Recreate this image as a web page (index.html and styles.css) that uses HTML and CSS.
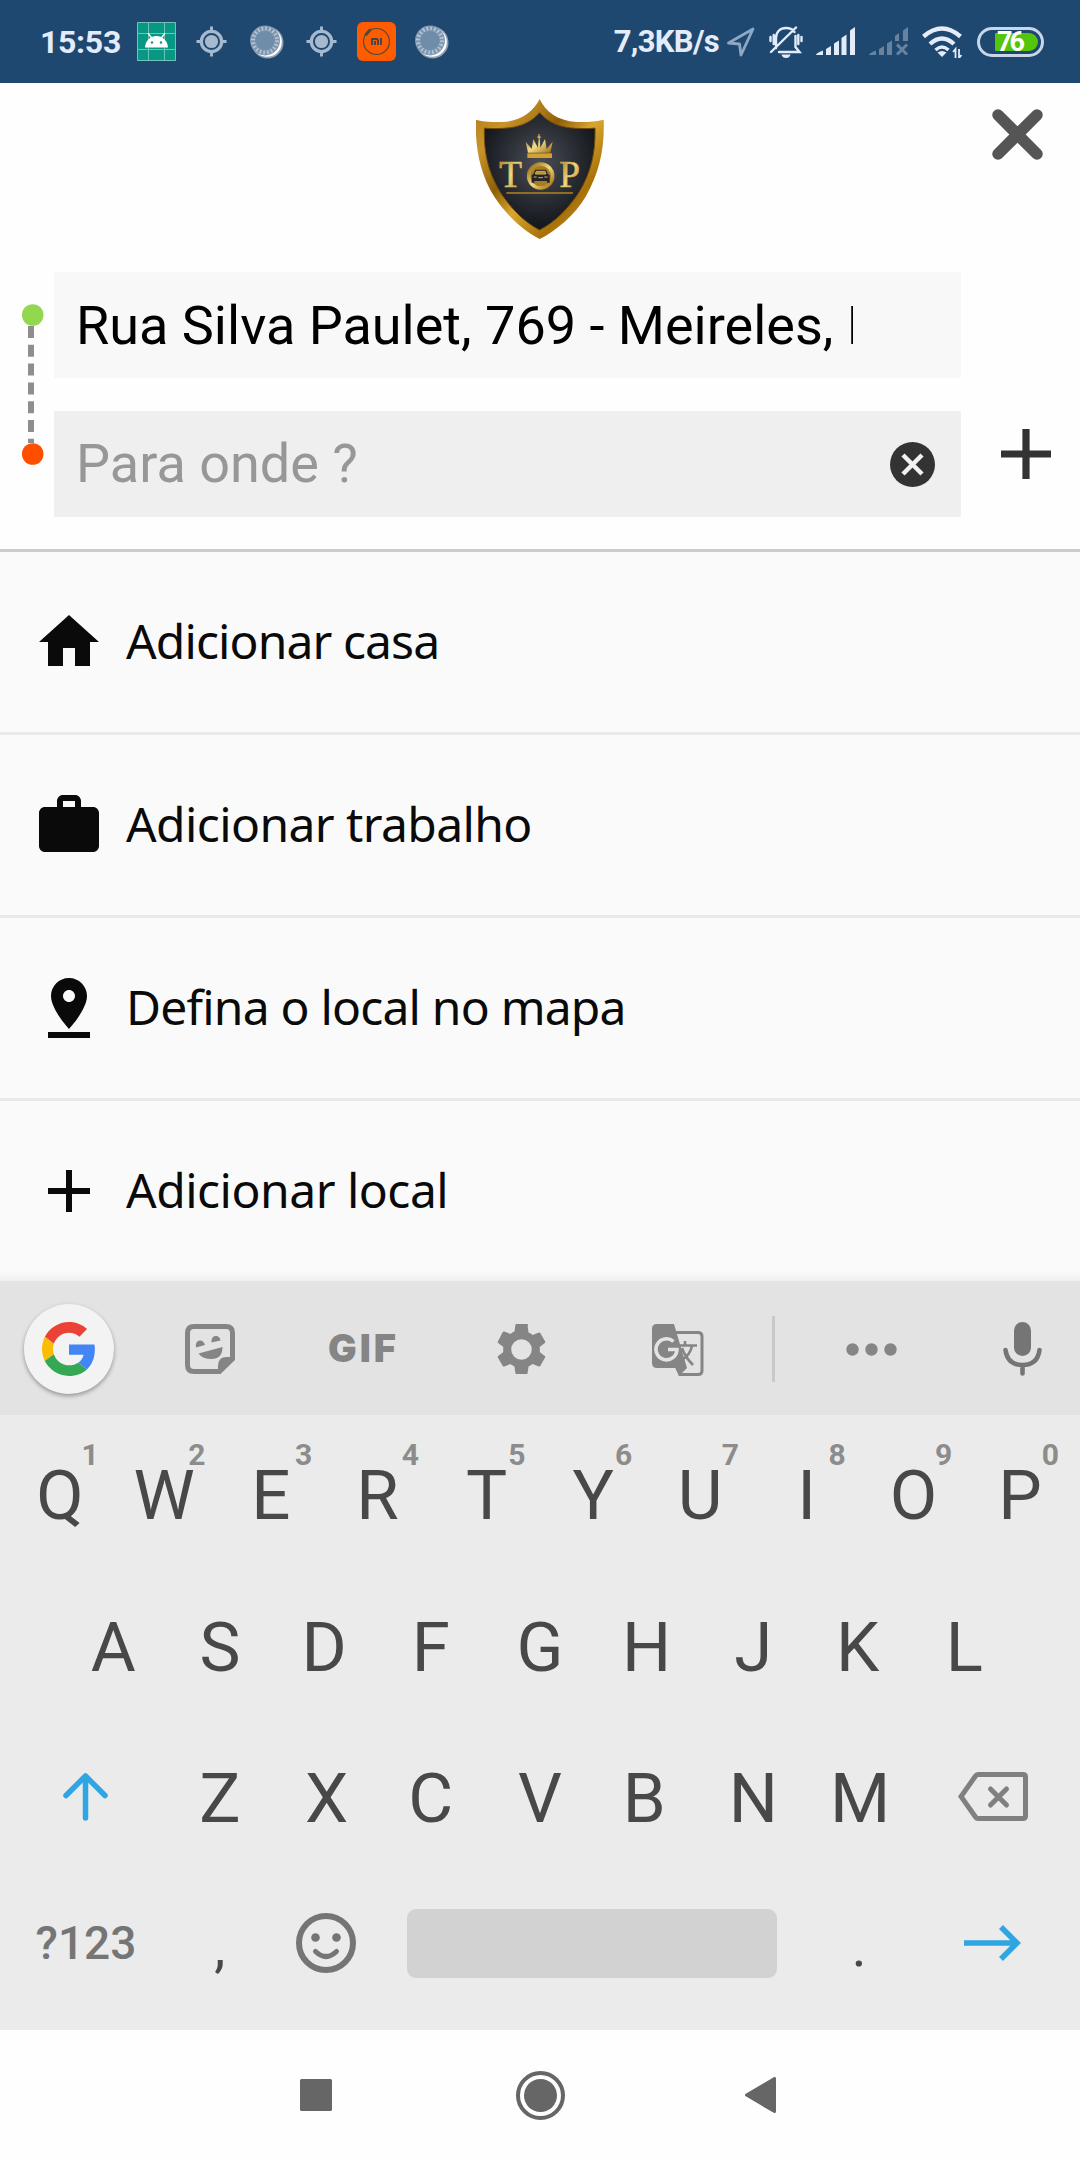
FILE: index.html
```
<!DOCTYPE html>
<html lang="pt-BR">
<head>
<meta charset="utf-8">
<title>Para onde?</title>
<link rel="stylesheet" href="styles.css">
</head>
<body>
<svg class="defs" width="0" height="0" aria-hidden="true">
  <defs>
    <linearGradient id="gold" x1="0" y1="0" x2="1" y2="1">
      <stop offset="0" stop-color="#b07a12"/><stop offset=".2" stop-color="#c8942a"/><stop offset=".4" stop-color="#8f5f08"/>
      <stop offset=".55" stop-color="#d8a62e"/><stop offset=".75" stop-color="#a87008"/><stop offset="1" stop-color="#e0b03a"/>
    </linearGradient>
    <linearGradient id="goldText" x1="0" y1="0" x2="1" y2="1">
      <stop offset="0" stop-color="#8f650e"/><stop offset=".5" stop-color="#f3da84"/><stop offset="1" stop-color="#9a6a0c"/>
    </linearGradient>
    <radialGradient id="night" cx=".5" cy=".42" r=".55">
      <stop offset="0" stop-color="#4a4d55"/><stop offset="1" stop-color="#14181d"/>
    </radialGradient>
    <symbol id="target" viewBox="0 0 32 32">
      <g fill="none" stroke="#a5b9cf"><circle cx="16" cy="16" r="10.5" stroke-width="3.4"/><path d="M16 .5v5M16 26.500v5M.5 16h5M26.500 16h5" stroke-width="3"/></g>
      <circle cx="16" cy="16" r="6.800" fill="#a5b9cf"/>
    </symbol>
    <symbol id="disc" viewBox="0 0 34 34">
      <circle cx="17.500" cy="17.500" r="16" fill="#8fa0b2"/>
      <circle cx="17" cy="17" r="14.800" fill="#fff"/>
      <circle cx="15" cy="15.500" r="15" fill="#7f97b0"/>
      <circle cx="15" cy="15.500" r="12" fill="none" stroke="#b9c7d6" stroke-width="4" stroke-dasharray="1.500 2.270"/>
      <circle cx="15" cy="15.500" r="9.500" fill="#6f8ca9"/>
    </symbol>
  </defs>
</svg>

<div class="screen">
  <div class="status">
    <div class="status-left">
      <span class="clock">15:53</span>
      <svg class="app" viewBox="0 0 39 39"><path fill="#089783" d="M0 0h39v39H0z"/><path stroke="#6cc5b8" fill="none" d="M.5.5h38v38H.5zM11.500 0v39M27.500 0v39M0 11.500h39M0 27.500h39"/><path fill="#fff" d="M8 25.500c.3-4.500 2.200-8 5.500-9.800L10.500 11.500l1-.8 3.300 4.300a13 13 0 0 1 9.400 0l3.300-4.300 1 .8-3 4.200c3.300 1.800 5.200 5.300 5.500 9.800z"/><circle cx="15" cy="20.500" r="1.200" fill="#089783"/><circle cx="24" cy="20.500" r="1.200" fill="#089783"/></svg>
      <svg class="target"><use href="#target"/></svg>
      <svg class="disc"><use href="#disc"/></svg>
      <svg class="target"><use href="#target"/></svg>
      <svg class="app" viewBox="0 0 39 39"><rect width="39" height="39" rx="6" fill="#ff5c00"/><circle cx="19.500" cy="19.500" r="13" fill="none" stroke="#4c4c40" stroke-width="1.200"/><path d="M8 13.500l6-6" stroke="#ff5c00" stroke-width="7"/><path d="M9 12.500l4-4.500" stroke="#4c4c40" stroke-width="3" stroke-linecap="round"/><path d="M15 23v-6h4.500q1.500 0 1.500 1.500V23M18 19v4M24 16v7" fill="none" stroke="#40464a" stroke-width="1.900"/></svg>
      <svg class="disc"><use href="#disc"/></svg>
    </div>
    <div class="status-right">
      <span class="speed">7,3KB/s</span>
      <svg class="nav-arrow" viewBox="0 0 30 30"><path d="M27 2 2.500 16l11 1L15 28z" fill="none" stroke="#8fa7c2" stroke-width="2.800" stroke-linejoin="round"/></svg>
      <svg class="bell" viewBox="0 0 34 32"><g fill="none" stroke="#e4ecfa" stroke-width="2.400"><path d="M7 22V12c0-6 4-10 10-10 4 0 7 1.500 8.500 4M26.500 10v11l4 5H10M2 26 27 1.500M1.500 11v4M4.700 9v9M29.300 9v9M32.500 11v4" stroke-linecap="round"/></g><path d="M12.500 28.500h9q-1 3.500-4.500 3.500t-4.500-3.500z" fill="#e4ecfa"/></svg>
      <svg class="signal" viewBox="0 0 40 28"><path fill="#e4ecfa" d="M0 28q0-2 7-4.500V28zM10 22l5-3v9h-5zM18 16.500l5-3V28h-5zM25.500 11l5-3.500V28h-5zM34 3.500 39 0v28h-5z"/></svg>
      <svg class="signal sim2" viewBox="0 0 40 28"><path fill="#69839f" d="M0 28q0-2 7-4.500V28zM10 22l5-3v9h-5zM18 16.500l5-3V28h-5zM26 9l4-3v8h-4zM34 3.500 39 0v14h-5z"/><path d="m28 17.500 10 10m0-10-10 10" stroke="#69839f" stroke-width="3"/></svg>
      <svg class="wifi" viewBox="0 0 40 32"><g fill="none" stroke="#e4ecfa" stroke-width="4.400"><path d="M1.500 10.500q18.500-16 37 0M8 18q12-11 24 0"/><path d="M13.500 24q6.500-6 13 0" stroke-width="3.500"/></g><path d="m15.500 26.500 4.500 4.500 4.500-4.500q-4.500-3-9 0z" fill="#e4ecfa"/><path d="M33.500 32v-9l-2.500 3M37 23v9l2.500-3" fill="none" stroke="#e4ecfa" stroke-width="1.800"/></svg>
      <div class="battery"><span class="battery-level">76</span></div>
    </div>
  </div>

  <header class="header">
    <div class="brand-row">
      <svg class="logo" viewBox="49 42 384 420">
        <path fill="url(#gold)" d="M240 42C222 78 185 108 130 111 95 112 65 109 49 104 46 180 58 262 105 337 140 390 190 437 240 462 290 437 345 390 378 335 420 262 435 190 432 104 410 109 385 112 350 111 292 107 258 80 240 42z"/>
        <path fill="url(#night)" stroke="#6d4a08" stroke-width="3" d="M240 83C215 112 180 128 130 130 105 131 85 131 74 129 72 200 84 260 122 322 155 372 195 412 240 435 285 412 325 372 358 322 395 262 408 200 406 129 390 131 375 131 350 130 300 128 265 112 240 83z"/>
        <path fill="url(#goldText)" d="M205 203 198 170l18 22 5-30 14 26 2-28-6-4 5-2v-7h4v7l5 2-5 4 2 28 14-26 5 30 18-22-7 33z"/>
        <path fill="#d3a12d" d="M203 205h74v14h-74z"/>
        <circle cx="243" cy="273" r="35" fill="#171a1f" stroke="url(#goldText)" stroke-width="13"/>
        <circle cx="243" cy="273" r="31" fill="#a97c20"/>
        <path fill="#22252a" d="M227 254h32l6 13 5 4v22h-8v-5h-38v5h-8v-22l5-4z"/><path d="M230 259h26l3 8h-32zM222 276h9M254 276h10M236 278h14" fill="#b98c2a" stroke="#d8b14a" stroke-width="3"/>
        <text class="logo-text" x="119" y="307">T</text><text class="logo-text" x="299" y="307">P</text>
        <path d="M140 324h200" stroke="#b5831d" stroke-width="5"/>
      </svg>
      <svg class="close" viewBox="0 0 51 51"><path d="m6 6 39 39m0-39L6 45" stroke="#555" stroke-width="11.500" stroke-linecap="round"/></svg>
    </div>
    <div class="route">
      <svg class="route-line" viewBox="0 0 22 162"><path d="M9 22v117" stroke="#8e8e8e" stroke-width="6" stroke-dasharray="12 6.800"/><circle cx="10.700" cy="11" r="10.800" fill="#92d84e"/><circle cx="10.700" cy="150" r="10.800" fill="#ff4e00"/></svg>
      <div class="fields">
        <div class="field from"><span class="value">Rua Silva Paulet, 769 - Meireles, Fortaleza</span></div>
        <div class="field to"><span class="placeholder">Para onde ?</span>
          <svg class="clear" viewBox="0 0 45 45"><circle cx="22.500" cy="22.500" r="22.500" fill="#333"/><path d="m13 13 19 19m0-19L13 32" stroke="#f2f2f2" stroke-width="4.500"/></svg>
        </div>
      </div>
      <svg class="add-stop" viewBox="0 0 50 50"><path d="M25 0v50M0 25h50" stroke="#333" stroke-width="7.200"/></svg>
    </div>
  </header>

  <main class="list">
    <div class="row"><svg class="row-icon" viewBox="0 0 24 24"><path d="M10 20v-6h4v6h5v-8h3L12 3 2 12h3v8z"/></svg><span class="label home-label">Adicionar casa</span></div>
    <div class="row"><svg class="row-icon" viewBox="0 0 24 24"><path d="M20 6h-4V4c0-1.110-.89-2-2-2h-4c-1.110 0-2 .89-2 2v2H4c-1.110 0-2 .89-2 2v11c0 1.110.89 2 2 2h16c1.110 0 2-.89 2-2V8c0-1.110-.89-2-2-2zm-6 0h-4V4h4v2z"/></svg><span class="label work-label">Adicionar trabalho</span></div>
    <div class="row"><svg class="row-icon" viewBox="0 0 24 24"><path d="M18 8c0-3.310-2.690-6-6-6S6 4.690 6 8c0 4.500 6 11 6 11s6-6.500 6-11zm-8 0c0-1.100.9-2 2-2s2 .9 2 2-.89 2-2 2c-1.100 0-2-.9-2-2zM5 20v2h14v-2H5z"/></svg><span class="label map-label">Defina o local no mapa</span></div>
    <div class="row"><svg class="row-icon" viewBox="0 0 24 24"><path d="M19 13h-6v6h-2v-6H5v-2h6V5h2v6h6v2z"/></svg><span class="label place-label">Adicionar local</span></div>
  </main>

  <section class="keyboard">
    <div class="tools">
      <div class="g-button"><svg viewBox="0 0 48 48"><path fill="#EA4335" d="M24 9.500c3.540 0 6.710 1.220 9.210 3.600l6.850-6.850C35.900 2.380 30.470 0 24 0 14.620 0 6.510 5.380 2.560 13.220l7.980 6.190C12.430 13.720 17.740 9.500 24 9.500z"/><path fill="#4285F4" d="M46.980 24.550c0-1.570-.15-3.090-.38-4.550H24v9.020h12.940c-.58 2.960-2.260 5.480-4.780 7.180l7.730 6c4.510-4.180 7.090-10.360 7.090-17.650z"/><path fill="#FBBC05" d="M10.530 28.590c-.48-1.450-.76-2.990-.76-4.590s.27-3.140.76-4.590l-7.980-6.190C.92 16.460 0 20.120 0 24c0 3.880.92 7.540 2.560 10.780l7.970-6.190z"/><path fill="#34A853" d="M24 48c6.480 0 11.930-2.130 15.890-5.810l-7.730-6c-2.150 1.450-4.920 2.300-8.160 2.300-6.260 0-11.570-4.220-13.470-9.910l-7.980 6.190C6.510 42.620 14.620 48 24 48z"/></svg></div>
      <svg class="sticker" viewBox="0 0 50 50"><path d="M9 2.500h32q6.500 0 6.500 6.500v26L34.500 47.500H9q-6.500 0-6.500-6.500V9q0-6.500 6.500-6.500z" fill="none" stroke="#858585" stroke-width="5"/><path fill="#858585" d="M33 49V42q0-9 8.500-9H49v2L35 49zM13.500 29.500 37.500 23q0 12-11 12-9 0-13-5.500zM11 23.500q-1-6 3.500-7 4-.5 5.500 4.500zM26.500 18.500q-.5-6 4-6.500 4-.5 5 4.500z"/></svg>
      <span class="gif">GIF</span>
      <svg class="gear" viewBox="2 2 20 20"><path fill="#858585" d="M19.140 12.940c.04-.3.060-.61.060-.94 0-.32-.02-.64-.07-.94l2.030-1.580c.18-.14.23-.41.120-.61l-1.920-3.320c-.12-.22-.37-.29-.59-.22l-2.390.96c-.5-.38-1.030-.7-1.620-.94l-.36-2.540A.48.48 0 0 0 13.920 2h-3.840c-.24 0-.43.170-.47.410l-.36 2.540c-.59.240-1.130.570-1.620.940l-2.390-.96c-.22-.08-.47 0-.59.220L2.740 8.870c-.12.210-.08.470.12.610l2.030 1.580c-.05.300-.09.630-.09.940s.02.640.07.940l-2.030 1.580c-.18.140-.23.410-.12.610l1.920 3.320c.12.220.37.290.59.220l2.390-.96c.5.380 1.030.7 1.620.940l.36 2.540c.05.240.24.410.48.410h3.840c.24 0 .44-.17.470-.41l.36-2.540c.59-.24 1.130-.56 1.620-.94l2.390.96c.22.080.47 0 .59-.22l1.920-3.320c.12-.22.070-.47-.12-.61l-2.010-1.580zM12 16.050A4.050 4.050 0 1 1 12 7.950a4.050 4.050 0 0 1 0 8.100z"/></svg>
      <svg class="translate" viewBox="0 0 52 52"><path d="M22 8.500h24q4 0 4 4v34q0 4-4 4H28L24 42" fill="none" stroke="#858585" stroke-width="3"/><path fill="#858585" d="M5 0h17l13 44-8 8-3-8H5q-5 0-5-5V5q0-5 5-5z"/><path d="M21.500 17.500a10.500 10.500 0 1 0 3.500 8h-9" fill="none" stroke="#e3e3e3" stroke-width="3.600"/><path d="M27 21.500h18M33 17v4.500M40 22q-2 9-10 14M30 24q3 9 11 17" fill="none" stroke="#858585" stroke-width="2.600"/></svg>
      <div class="tool-rule"></div>
      <svg class="dots" viewBox="0 0 51 13"><g fill="#858585"><circle cx="6.500" cy="6.500" r="6.200"/><circle cx="25.500" cy="6.500" r="6.200"/><circle cx="44.500" cy="6.500" r="6.200"/></g></svg>
      <svg class="mic" viewBox="0 0 39 54"><rect x="11" width="17" height="34" rx="8.500" fill="#757575"/><path d="M2.500 28q2 15 17 15t17-15M19.500 43v8.500" fill="none" stroke="#757575" stroke-width="4.600" stroke-linecap="round"/></svg>
    </div>
    <div class="keys">
      <div class="key-row">
        <div class="key">Q<sup>1</sup></div><div class="key shifted">W<sup>2</sup></div><div class="key shifted">E<sup>3</sup></div><div class="key shifted">R<sup>4</sup></div><div class="key">T<sup>5</sup></div><div class="key">Y<sup>6</sup></div><div class="key">U<sup>7</sup></div><div class="key">I<sup>8</sup></div><div class="key">O<sup>9</sup></div><div class="key">P<sup>0</sup></div>
      </div>
      <div class="key-row">
        <div class="key">A</div><div class="key">S</div><div class="key shifted">D</div><div class="key shifted">F</div><div class="key">G</div><div class="key">H</div><div class="key">J</div><div class="key shifted">K</div><div class="key shifted">L</div>
      </div>
      <div class="key-row">
        <div class="key wide"><svg class="shift" viewBox="0 0 45 48"><path d="M22.500 45V4M3 22.500 22.500 3 42 22.500" fill="none" stroke="#2fa5e2" stroke-width="5.500" stroke-linecap="round" stroke-linejoin="round"/></svg></div>
        <div class="key">Z</div><div class="key">X</div><div class="key shifted">C</div><div class="key">V</div><div class="key shifted">B</div><div class="key">N</div><div class="key">M</div>
        <div class="key wide"><svg class="backspace" viewBox="0 0 70 49"><g fill="none" stroke="#808080" stroke-width="5"><path d="M20 2.500h45q2.500 0 2.500 2.500v39q0 2.500-2.500 2.500H20q-1.500 0-2.500-1.500L3 24.500 17.500 4q1-1.500 2.500-1.500z"/><path d="m32.500 17 16 16m0-16-16 16" stroke-linecap="round"/></g></svg></div>
      </div>
      <div class="key-row bottom">
        <div class="key wide symbols">?123</div>
        <div class="key punct">,</div>
        <div class="key"><svg class="smile" viewBox="0 0 60 60"><circle cx="30" cy="30" r="27" fill="none" stroke="#757575" stroke-width="6"/><circle cx="19.500" cy="24.500" r="4.300" fill="#757575"/><circle cx="40.500" cy="24.500" r="4.300" fill="#757575"/><path d="M19.500 38.500q10.500 10 21 0" fill="none" stroke="#757575" stroke-width="5" stroke-linecap="round"/></svg></div>
        <div class="space"></div>
        <div class="key punct">.</div>
        <div class="key wide"><svg class="go" viewBox="0 0 57 36"><path d="M0 18h53M37 2l16 16-16 16" fill="none" stroke="#2fa5e2" stroke-width="5.600"/></svg></div>
      </div>
    </div>
  </section>

  <nav class="navbar">
    <svg class="recent" viewBox="0 0 32 32"><rect width="32" height="32" rx="1.500" fill="#666"/></svg>
    <svg class="home" viewBox="0 0 49 49"><circle cx="24.500" cy="24.500" r="22.500" fill="none" stroke="#666" stroke-width="4"/><circle cx="24.500" cy="24.500" r="16.500" fill="#666"/></svg>
    <svg class="back" viewBox="0 0 31 36"><path d="M29.500 1.500v33L1.500 18z" fill="#666" stroke="#666" stroke-width="3" stroke-linejoin="round"/></svg>
  </nav>
</div>
</body>
</html>
```
FILE: styles.css
```
* { box-sizing: border-box; }
body { margin: 0; background: #fff; font-family: Roboto, sans-serif; }
svg { display: block; flex: none; }
.defs { position: absolute; }
.screen { width: 1080px; height: 2160px; display: flex; flex-direction: column; overflow: hidden; background: #fefefe; }

.status { height: 83px; flex: none; background: #1f4871; color: #e4ecfa; display: flex; justify-content: space-between; padding: 0 36px 0 40px; }
.status-left, .status-right { display: flex; align-items: center; }
.clock { font-size: 32px; font-weight: 700; width: 97px; line-height: 83px; padding-top: 2px; letter-spacing: -0.3px; }
.app { width: 39px; height: 39px; }
.target { width: 31px; height: 31px; margin-left: 20px; }
.disc { width: 34px; height: 34px; margin-left: 23px; }
.disc + .target { margin-left: 22px; }
.target + .app { margin-left: 20px; }
.app + .disc { margin-left: 19px; }
.speed { font-size: 31px; font-weight: 700; letter-spacing: -0.7px; margin-right: 7px; line-height: 83px; }
.nav-arrow { width: 30px; height: 30px; margin-right: 13px; }
.bell { width: 34px; height: 32px; margin-right: 13px; }
.signal { width: 40px; height: 28px; margin-right: 13px; margin-bottom: 2px; }
.wifi { width: 40px; height: 32px; margin-right: 15px; }
.battery { width: 67px; height: 30px; border: 3px solid #c9d6e8; border-radius: 15px; padding: 3px; display: flex; justify-content: flex-end; }
.battery-level { width: 43px; height: 18px; line-height: 19px; background: #55c40c; border-radius: 1px 9px 9px 1px; color: #fff; font-size: 27px; font-weight: 700; padding-left: 2px; letter-spacing: -3px; }

.header { height: 469px; flex: none; border-bottom: 3px solid #ccc; background: #fefefe; }
.brand-row { height: 189px; display: flex; justify-content: space-between; padding: 16px 37px 0 476px; }
.logo { width: 128px; height: 140px; }
.logo-text { font-family: "Liberation Serif", serif; font-size: 112px; font-weight: 400; fill: url(#goldText); stroke: #d8b55a; stroke-width: 2px; }
.close { width: 51px; height: 51px; margin-top: 10px; }
.route { display: flex; }
.route-line { width: 22px; height: 162px; margin: 32px 10px 0 22px; }
.fields { width: 907px; display: flex; flex-direction: column; gap: 33px; }
.field { height: 106px; display: flex; align-items: center; justify-content: space-between; padding: 0 26px 0 22px; font-size: 54px; line-height: 105px; }
.from { background: #f8f8f8; color: #000; }
.to { background: #efefef; color: #979797; }
.value { width: 777px; white-space: nowrap; overflow: hidden; }
.placeholder { margin-top: -2px; }
.clear { width: 45px; height: 45px; }
.add-stop { width: 50px; height: 50px; margin: 157px 0 0 40px; }

.list { height: 729px; flex: none; overflow: hidden; background: #fafafa; box-shadow: inset 0 -12px 9px -8px #eee; }
.row { height: 183px; border-bottom: 3px solid #e9e9e9; display: flex; align-items: center; gap: 22px; padding-left: 33px; font-family: "Noto Sans", sans-serif; font-size: 48px; color: #0a0a0a; white-space: nowrap; }
.row-icon { width: 72px; height: 72px; fill: #0a0a0a; }
.label { padding-bottom: 3px; margin-left: -1px; }
.home-label { letter-spacing: -0.9px; }
.work-label { letter-spacing: -0.6px; }
.map-label { letter-spacing: -0.8px; }
.place-label { letter-spacing: -0.5px; }

.keyboard { height: 749px; flex: none; background: #ebebeb; color: #484848; }
.tools { height: 134px; background: #e3e3e3; display: flex; align-items: center; padding: 2px 0 0 24px; }
.g-button { width: 90px; height: 90px; border-radius: 50%; background: #f3f3f3; box-shadow: 0 2px 4px rgba(0, 0, 0, .35); display: flex; align-items: center; justify-content: center; }
.g-button svg { width: 54px; height: 54px; }
.sticker { width: 50px; height: 50px; margin-left: 71px; }
.gif { width: 75px; margin-left: 93px; margin-top: -2px; font-family: Inter, sans-serif; font-weight: 900; font-size: 38px; color: #858585; letter-spacing: 3px; }
.gear { width: 51px; height: 51px; margin: 1px 0 0 93px; }
.translate { width: 52px; height: 52px; margin: 2px 0 0 105px; }
.tool-rule { width: 3px; height: 66px; margin-left: 68px; background: #c9c9c9; }
.dots { width: 51px; height: 13px; margin-left: 71px; }
.mic { width: 39px; height: 54px; margin-left: 106px; }

.keys { padding-top: 5px; }
.key-row { height: 151.500px; display: flex; justify-content: center; }
.key { position: relative; width: 106.700px; display: flex; align-items: center; justify-content: center; font-size: 69px; line-height: 1; }
.shifted { padding-right: 5px; }
.wide { width: 160px; }
.key sup { position: absolute; top: 17px; left: 75px; font-size: 30px; line-height: 35px; font-weight: 700; color: #8c8c8c; }
.bottom { height: 137px; }
.symbols { font-size: 46px; font-weight: 500; color: #757575; padding-right: 2px; }
.punct { font-size: 56px; padding: 8px 1px 0 0; }
.shift { width: 45px; height: 48px; margin: 0 2px 4px 0; }
.backspace { width: 70px; height: 49px; margin-bottom: 4px; }
.smile { width: 60px; height: 60px; margin-right: 3px; }
.space { width: 370px; height: 69px; align-self: center; margin: 0 29px 0 27px; border-radius: 9px; background: #d2d2d2; }
.go { width: 57px; height: 36px; margin-right: 2px; }

.navbar { height: 130px; background: #fefefe; display: flex; align-items: center; padding-left: 300px; }
.recent { width: 32px; height: 32px; }
.home { width: 49px; height: 49px; margin: 0 180px 0 184px; }
.back { width: 31px; height: 36px; }
```
